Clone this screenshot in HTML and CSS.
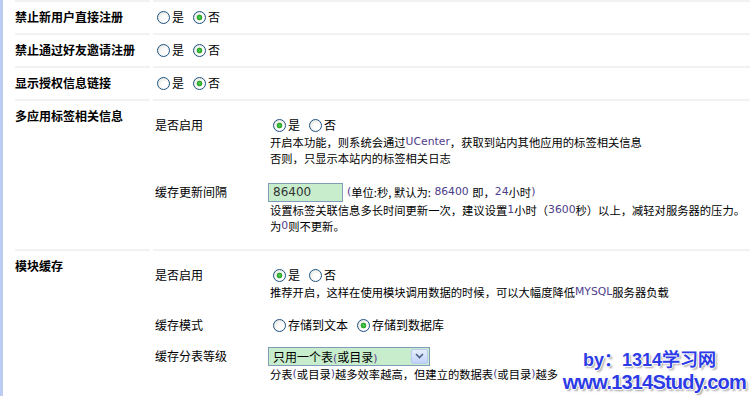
FILE: index.html
```html
<!DOCTYPE html>
<html lang="zh-CN">
<head>
  <meta charset="UTF-8">
  <title>注册与缓存设置</title>
  <link rel="stylesheet" href="styles.css">
</head>
<body>
  <div class="page">
    <div class="row">
      <div class="label">禁止新用户直接注册</div>
      <div class="value line">
        <label class="opt"><span class="radio"></span>是</label>
        <label class="opt"><span class="radio on"></span>否</label>
      </div>
    </div>

    <div class="row">
      <div class="label">禁止通过好友邀请注册</div>
      <div class="value line">
        <label class="opt"><span class="radio"></span>是</label>
        <label class="opt"><span class="radio on"></span>否</label>
      </div>
    </div>

    <div class="row">
      <div class="label">显示授权信息链接</div>
      <div class="value line">
        <label class="opt"><span class="radio"></span>是</label>
        <label class="opt"><span class="radio on"></span>否</label>
      </div>
    </div>

    <div class="row group">
      <div class="label">多应用标签相关信息</div>
      <div class="value">
        <div class="sub">
          <div class="sub-label">是否启用</div>
          <div class="sub-value">
            <div class="line">
              <label class="opt"><span class="radio on"></span>是</label>
              <label class="opt"><span class="radio"></span>否</label>
            </div>
            <div class="desc">开启本功能，则系统会通过<span class="en">UCenter</span>，获取到站内其他应用的标签相关信息</div>
            <div class="desc">否则，只显示本站内的标签相关日志</div>
          </div>
        </div>
        <div class="sub tall">
          <div class="sub-label">缓存更新间隔</div>
          <div class="sub-value">
            <div class="line">
              <span class="field">86400</span>
              <span class="en">(</span>单位:秒, 默认为: <span class="en">&nbsp;86400&nbsp;</span>即，<span class="en">24</span>小时<span class="en">)</span>
            </div>
            <div class="desc">设置标签关联信息多长时间更新一次，建议设置<span class="en">1</span>小时（<span class="en">3600</span>秒）以上，减轻对服务器的压力。</div>
            <div class="desc">为<span class="en">0</span>则不更新。</div>
          </div>
        </div>
      </div>
    </div>

    <div class="row group last">
      <div class="label">模块缓存</div>
      <div class="value">
        <div class="sub">
          <div class="sub-label">是否启用</div>
          <div class="sub-value">
            <div class="line">
              <label class="opt"><span class="radio on"></span>是</label>
              <label class="opt"><span class="radio"></span>否</label>
            </div>
            <div class="desc">推荐开启，这样在使用模块调用数据的时候，可以大幅度降低<span class="en">MYSQL</span>服务器负载</div>
          </div>
        </div>
        <div class="sub">
          <div class="sub-label">缓存模式</div>
          <div class="sub-value">
            <div class="line">
              <label class="opt"><span class="radio"></span>存储到文本</label>
              <label class="opt"><span class="radio on"></span>存储到数据库</label>
            </div>
          </div>
        </div>
        <div class="sub tall near">
          <div class="sub-label">缓存分表等级</div>
          <div class="sub-value">
            <div class="line">
              <span class="dropdown">
                <span class="dropdown-text">只用一个表<span class="en">(</span>或目录<span class="en">)</span></span>
                <span class="dropdown-btn">
                  <svg width="9" height="6" viewBox="0 0 9 6"><path d="M1 1 L4.5 4.5 L8 1" fill="none" stroke="#4d6185" stroke-width="1.6"/></svg>
                </span>
              </span>
            </div>
            <div class="desc">分表<span class="en">(</span>或目录<span class="en">)</span>越多效率越高，但建立的数据表<span class="en">(</span>或目录<span class="en">)</span>越多</div>
          </div>
        </div>
      </div>
    </div>

    <div class="watermark">
      <div class="wm-line small">by：1314学习网</div>
      <div class="wm-line">www.1314Study.com</div>
    </div>
  </div>
</body>
</html>
```

FILE: styles.css
```css
body {
  margin: 0;
  background: #fff;
  color: #000;
  font-family: "Noto Sans CJK SC", sans-serif;
  font-size: 11.3px;
  line-height: 16px;
}

.page {
  position: relative;
  box-sizing: border-box;
  height: 396px;
  overflow: hidden;
  border-left: 3px solid #bccbf0;
  padding-left: 12px;
}

.row {
  display: grid;
  grid-template-columns: 135px 1fr;
  column-gap: 3px;
}

.row > div {
  border-top: 2px solid #f2f2f2;
}

.label {
  height: 16px;
  padding: 7px 0 8px;
  font-size: 12px;
  font-weight: bold;
}

.value {
  padding: 7px 0 8px;
  white-space: nowrap;
}

.group .value {
  padding: 15px 0;
}

.line {
  display: flex;
  align-items: center;
  height: 16px;
}

.opt {
  display: inline-flex;
  align-items: center;
  margin-right: 9px;
  font-size: 12px;
}

.value > .opt:first-child,
.line > .opt:first-child {
  margin-left: 4px;
}

.sub-value .line > .opt:first-child {
  margin-left: 3px;
}

.radio {
  display: inline-block;
  box-sizing: border-box;
  width: 13px;
  height: 13px;
  margin-right: 2px;
  border: 1px solid #1c5180;
  border-radius: 50%;
  background: radial-gradient(circle at 65% 65%, #fff 0, #fff 30%, #dcdcd5 100%);
}

.radio.on {
  background:
    radial-gradient(circle, #5cd05c 0, #21a121 2.5px, transparent 3.2px),
    radial-gradient(circle at 65% 65%, #fff 0, #fff 30%, #dcdcd5 100%);
}

.sub {
  display: grid;
  grid-template-columns: 115px 1fr;
  padding-left: 2px;
}

.sub + .sub {
  margin-top: 16px;
}

.sub.near {
  margin-top: 12px;
}

.sub-label {
  display: flex;
  align-items: center;
  height: 18px;
  font-size: 12px;
}

.sub-value .line {
  height: 18px;
}

.sub.tall .sub-label,
.sub.tall .line {
  height: 20px;
}

.desc {
  height: 16px;
  display: flex;
  align-items: center;
}

.en {
  font-family: "DejaVu Sans", sans-serif;
  font-size: 10.8px;
  color: #4d3c8a;
}

.field {
  display: inline-block;
  box-sizing: border-box;
  width: 75px;
  height: 19px;
  margin: 0 4px 0 -2px;
  padding-left: 4px;
  border: 1px solid #7f9db9;
  background: #c7edcc;
  color: #333;
  font-family: "DejaVu Sans", sans-serif;
  font-size: 12px;
  line-height: 17px;
}

.dropdown {
  display: inline-flex;
  box-sizing: border-box;
  width: 162px;
  height: 19px;
  margin-left: -2px;
  border: 1px solid #7f9db9;
  background: #c7edcc;
}

.dropdown-text {
  flex: 1;
  padding-left: 4px;
  font-size: 12px;
  line-height: 17px;
}

.dropdown-text .en {
  color: #5a3f8f;
}

.dropdown-btn {
  display: flex;
  align-items: center;
  justify-content: center;
  width: 15px;
  margin: 1px;
  border: 1px solid #b9c9ef;
  border-radius: 2px;
  background: linear-gradient(#e6eefc, #c1d3fb);
}

.watermark {
  position: absolute;
  right: 4px;
  bottom: 3px;
  text-align: right;
  color: #2d3be6;
  font-family: "Liberation Sans", sans-serif;
  font-weight: bold;
  white-space: nowrap;
  text-shadow:
    1px 0 0 #fff, -1px 0 0 #fff, 0 1px 0 #fff, 0 -1px 0 #fff,
    2px 2px 2px rgba(0, 0, 0, 0.35);
}

.wm-line {
  font-size: 20px;
  line-height: 22px;
  letter-spacing: -0.8px;
}

.wm-line.small {
  margin-right: 30px;
  font-size: 18px;
  letter-spacing: 0;
}
```
